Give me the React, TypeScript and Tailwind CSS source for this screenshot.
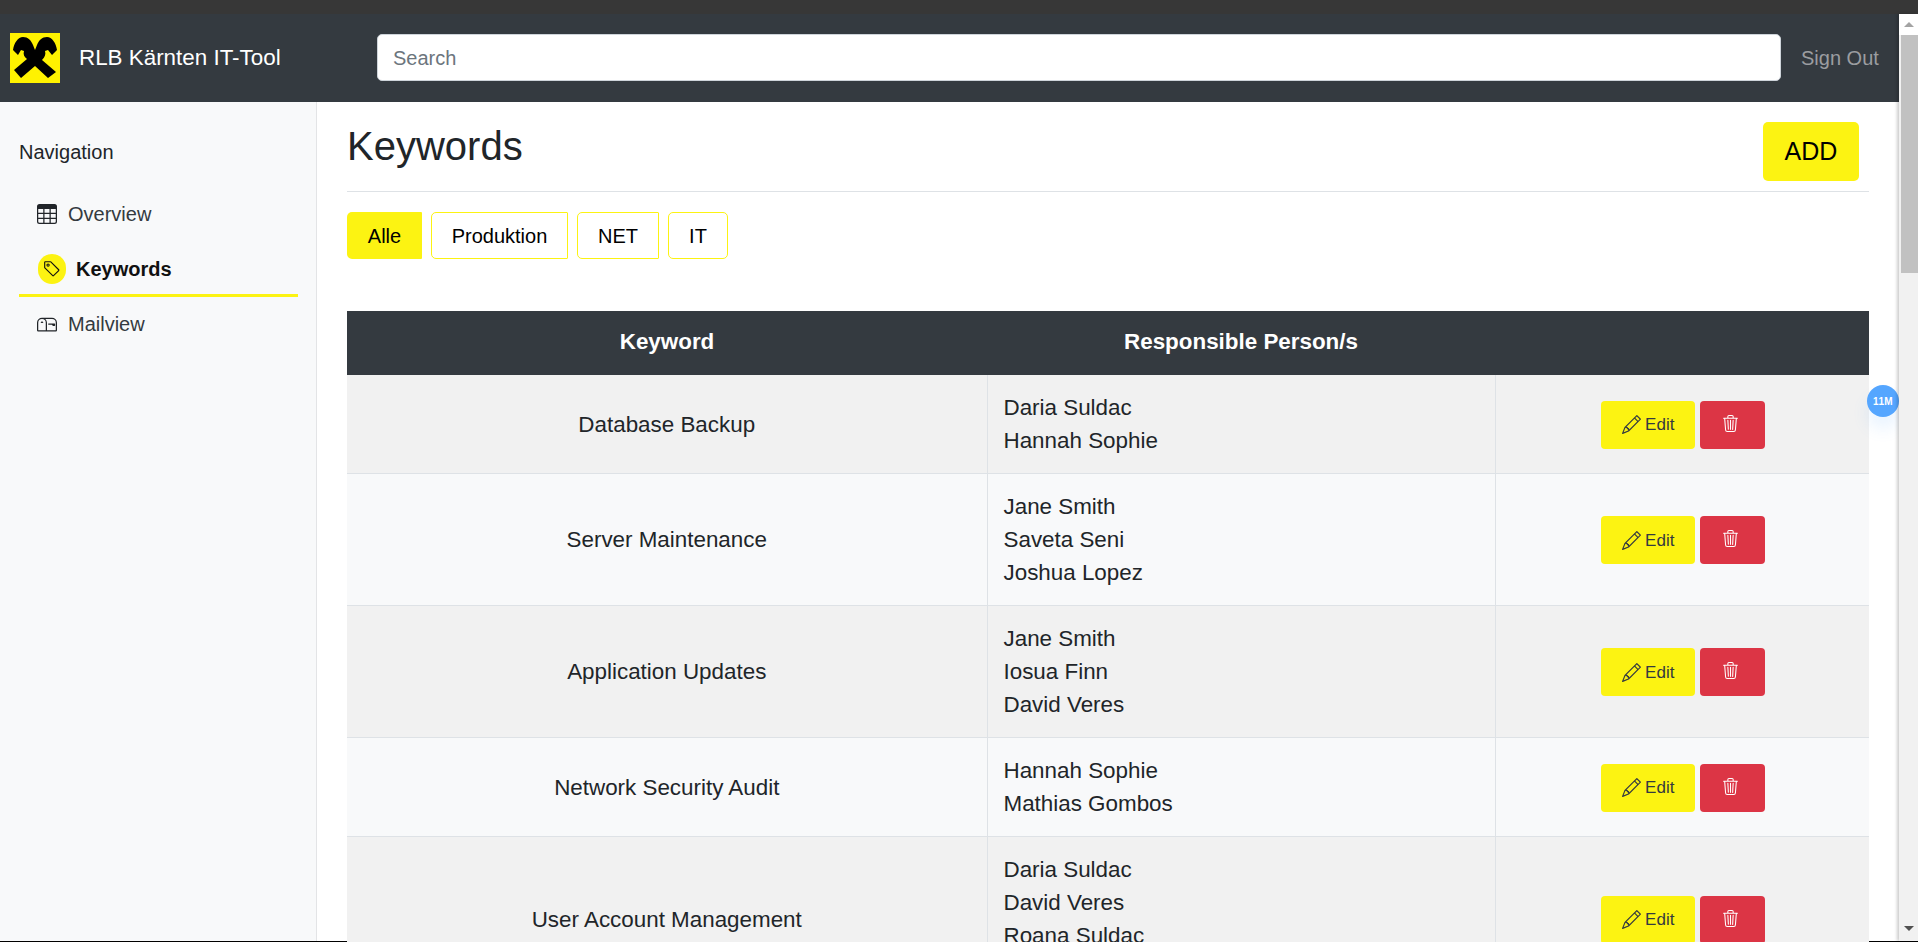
import { BsTable, BsTag, BsMailbox, BsPencil, BsTrash3 } from "react-icons/bs";

const rows = [
  { k: "Database Backup", p: ["Daria Suldac", "Hannah Sophie"], alt: false, tall: false },
  { k: "Server Maintenance", p: ["Jane Smith", "Saveta Seni", "Joshua Lopez"], alt: true, tall: false },
  { k: "Application Updates", p: ["Jane Smith", "Iosua Finn", "David Veres"], alt: false, tall: false },
  { k: "Network Security Audit", p: ["Hannah Sophie", "Mathias Gombos"], alt: true, tall: false },
  { k: "User Account Management", p: ["Daria Suldac", "David Veres", "Roana Suldac"], alt: false, tall: true },
];

function Logo() {
  return (
    <svg width="50" height="50" viewBox="0 0 50 50" className="shrink-0">
      <rect width="50" height="50" fill="#fff200" />
      <path
        d="M3 17 C4 10 8 4 13 4 C18 4 21 7 23 12 L25 17 L27 12 C29 7 32 4 37 4 C42 4 46 10 47 17 L42 22 L38 17 L35 18 C36 21 35 24 32 27 L46 39 L38 45 L25 33 L11 45 L4 37 L17 26 C14 24 13 21 14 18 L11 17 L8 22 Z"
        fill="#000"
      />
    </svg>
  );
}

export default function App() {
  return (
    <div className="h-[942px] w-[1918px] overflow-hidden flex flex-col bg-white font-['Liberation_Sans',Arial,sans-serif] text-[#212529]">
      <div className="h-[14px] shrink-0 bg-[#373737]" />
      <div className="flex flex-1 min-h-0">
        <div className="flex-1 min-w-0 flex flex-col relative">
          <header className="h-[88px] shrink-0 bg-[#343a40] flex items-center pl-[10px] pr-[20px]">
            <Logo />
            <span className="ml-[19px] w-[298px] shrink-0 text-[22.4px] text-white">RLB Kärnten IT-Tool</span>
            <input
              placeholder="Search"
              className="mb-[1px] h-[47px] w-[1404px] shrink-0 rounded-[5px] border border-[#ced4da] bg-white px-[15px] pt-[1px] text-[20px] text-[#495057] placeholder:text-[#6c757d] outline-none"
            />
            <span className="ml-[20px] text-[20px] text-[#9b9da0]">Sign Out</span>
          </header>
          <div className="flex flex-1 min-h-0">
            <aside className="w-[317px] shrink-0 bg-[#f8f9fa] border-r border-[#e3e4e6] pt-[35px] pl-[19px] pr-[18px] text-[20px]">
              <div className="leading-[30px]">Navigation</div>
              <div className="mt-[24px] flex items-center h-[45px] pl-[18px] gap-[11px] text-[#343a40]">
                <BsTable className="text-[20px] text-[#212529]" />
                <span>Overview</span>
              </div>
              <div className="mt-[10px] flex items-center h-[45px] pl-[19px] gap-[10px] font-bold text-[#111]">
                <span className="w-[28px] h-[30px] rounded-full bg-[#fcf312] flex items-center justify-center">
                  <BsTag className="text-[18px]" />
                </span>
                <span>Keywords</span>
              </div>
              <div className="mt-[3px] h-[3px] bg-[#fcf312]" />
              <div className="mt-[4px] flex items-center h-[45px] pl-[18px] gap-[11px] text-[#343a40]">
                <BsMailbox className="text-[20px] text-[#212529]" />
                <span>Mailview</span>
              </div>
            </aside>
            <main className="flex-1 min-w-0 pl-[30px] pr-[30px]">
              <div className="h-[90px] border-b border-[#dee2e6] flex justify-between items-start">
                <h1 className="text-[40px] leading-[47px] mt-[21px]">Keywords</h1>
                <button className="mt-[20px] mr-[10px] w-[96px] h-[59px] rounded-[5px] bg-[#fcf312] text-[25px] text-black">ADD</button>
              </div>
              <div className="mt-[20px] flex gap-[9px] text-[20px] text-black">
                <button className="h-[47px] w-[75px] rounded-l-[5px] rounded-r-[1px] bg-[#fcf312]">Alle</button>
                <button className="h-[47px] w-[137px] rounded-l-[5px] rounded-r-[1px] border border-[#fcf312]">Produktion</button>
                <button className="h-[47px] w-[82px] rounded-l-[5px] rounded-r-[1px] border border-[#fcf312]">NET</button>
                <button className="h-[47px] w-[60px] rounded-[5px] border border-[#fcf312]">IT</button>
              </div>
              <table className="mt-[52px] w-[1522px] table-fixed border-collapse text-[22.4px] leading-[33px]">
                <colgroup>
                  <col className="w-[640px]" />
                  <col className="w-[508px]" />
                  <col className="w-[374px]" />
                </colgroup>
                <thead>
                  <tr className="h-[64px] bg-[#343a40] text-white">
                    <th className="font-bold text-center pb-[3px]">Keyword</th>
                    <th className="font-bold text-center pb-[3px]">Responsible Person/s</th>
                    <th />
                  </tr>
                </thead>
                <tbody>
                  {rows.map((r) => (
                    <tr key={r.k} className={r.tall ? "h-[165px] bg-[#f1f1f1]" : r.alt ? "bg-[#f8f9fa]" : "bg-[#f1f1f1]"}>
                      <td className="text-center py-[16px] border-b border-[#dee2e6]">{r.k}</td>
                      <td className={r.tall ? "align-top px-[16px] py-[16px] border-x border-b border-[#dee2e6]" : "px-[16px] py-[16px] border-x border-b border-[#dee2e6]"}>
                        {r.p.map((n) => (
                          <div key={n}>{n}</div>
                        ))}
                      </td>
                      <td className="py-[16px] border-b border-[#dee2e6]">
                        <div className="flex justify-center gap-[5px] pl-[2px] pt-[1px]">
                          <button className="w-[94px] h-[48px] rounded-[4px] bg-[#fcf312] flex items-center justify-center gap-[4px] text-[17px] text-[#343a40]">
                            <BsPencil className="text-[19px]" />
                            Edit
                          </button>
                          <button className="w-[65px] h-[48px] rounded-[4px] bg-[#dc3545] flex items-center justify-center pr-[4px] pb-[3px] text-white">
                            <BsTrash3 className="text-[17px]" />
                          </button>
                        </div>
                      </td>
                    </tr>
                  ))}
                </tbody>
              </table>
            </main>
          </div>
          <div className="absolute right-0 top-[371px] w-[32px] h-[32px] rounded-full bg-[#55a6ff] text-white text-[10px] font-bold tracking-[0.3px] flex items-center justify-center shadow-[0_12px_16px_rgba(85,166,255,0.12)]">
            11M
          </div>
        </div>
        <div className="w-[19px] shrink-0 bg-[#f1f1f1] flex flex-col items-center shadow-[-2px_0_3px_rgba(0,0,0,0.2)] relative">
          <div className="h-[21px] w-full bg-white flex items-center justify-center">
            <div className="w-0 h-0 border-x-[5px] border-x-transparent border-b-[5px] border-b-[#a3a3a3]" />
          </div>
          <div className="ml-[2px] h-[238px] w-[17px] bg-[#c1c1c1]" />
          <div className="mt-auto mb-[10px] w-0 h-0 border-x-[5px] border-x-transparent border-t-[5px] border-t-[#505050]" />
        </div>
      </div>
      <div className="h-px shrink-0 bg-black" />
    </div>
  );
}
